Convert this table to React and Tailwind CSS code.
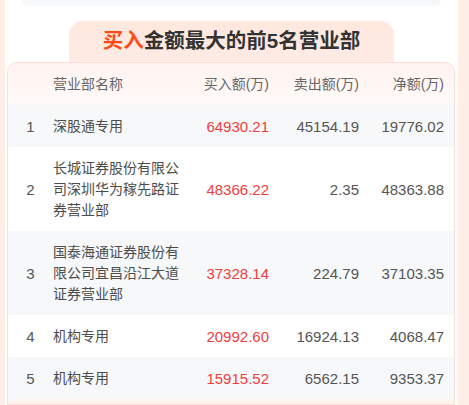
const ROWS = [
  { rank: 1, name: '深股通专用', buy: '64930.21', sell: '45154.19', net: '19776.02' },
  { rank: 2, name: '长城证券股份有限公司深圳华为稼先路证券营业部', buy: '48366.22', sell: '2.35', net: '48363.88' },
  { rank: 3, name: '国泰海通证券股份有限公司宜昌沿江大道证券营业部', buy: '37328.14', sell: '224.79', net: '37103.35' },
  { rank: 4, name: '机构专用', buy: '20992.60', sell: '16924.13', net: '4068.47' },
  { rank: 5, name: '机构专用', buy: '15915.52', sell: '6562.15', net: '9353.37' },
];

const COLS = 'grid grid-cols-[45px_127px_89px_90px_85px] pr-[10px]';

export default function App() {
  return (
    <div
      className="w-[469px] h-[405px] overflow-hidden bg-[#fdefe7] pl-[5px] pr-[11px]"
      style={{ fontFamily: '"Liberation Sans", "Noto Sans CJK SC", sans-serif' }}
    >
      <div className="h-full bg-white flex flex-col">
        {/* previous block tail */}
        <div className="mx-[17px] h-[6px] rounded-b-[8px] bg-[#f6f7f9]" />

        {/* title tab */}
        <div className="mt-[15px] ml-[64px] w-[325px] h-[41px] rounded-t-[14px] bg-gradient-to-b from-[#ffe8de] to-[#fdebe4] flex items-center justify-center">
          <span className="text-[20.5px] font-bold text-[#333] leading-none">
            <span className="text-[#ff4a17]">买入</span>金额最大的前5名营业部
          </span>
        </div>

        {/* table card */}
        <div className="ml-[2px] w-[448px] flex-1 rounded-t-[10px] border border-[#fcdcd5] bg-[#fff3ed] overflow-hidden">
          <div className={`${COLS} h-[42px] items-center text-[14px] text-[#666] bg-gradient-to-b from-[#fff3f0] to-[#fffaf8]`}>
            <div />
            <div>营业部名称</div>
            <div className="text-right">买入额(万)</div>
            <div className="text-right">卖出额(万)</div>
            <div className="text-right">净额(万)</div>
          </div>
          {ROWS.map((r, i) => (
            <div
              key={r.rank}
              className={`${COLS} items-center py-[10.5px] leading-[21px] ${i % 2 === 0 ? 'bg-[#f7f8fa]' : 'bg-white'}`}
            >
              <div className="text-center text-[15px] text-[#555]">{r.rank}</div>
              <div className="text-[14px] text-[#4d4d4d] break-all">{r.name}</div>
              <div className="text-right text-[15px] text-[#f23d3d]">{r.buy}</div>
              <div className="text-right text-[15px] text-[#555]">{r.sell}</div>
              <div className="text-right text-[15px] text-[#555]">{r.net}</div>
            </div>
          ))}
        </div>
      </div>
    </div>
  );
}
